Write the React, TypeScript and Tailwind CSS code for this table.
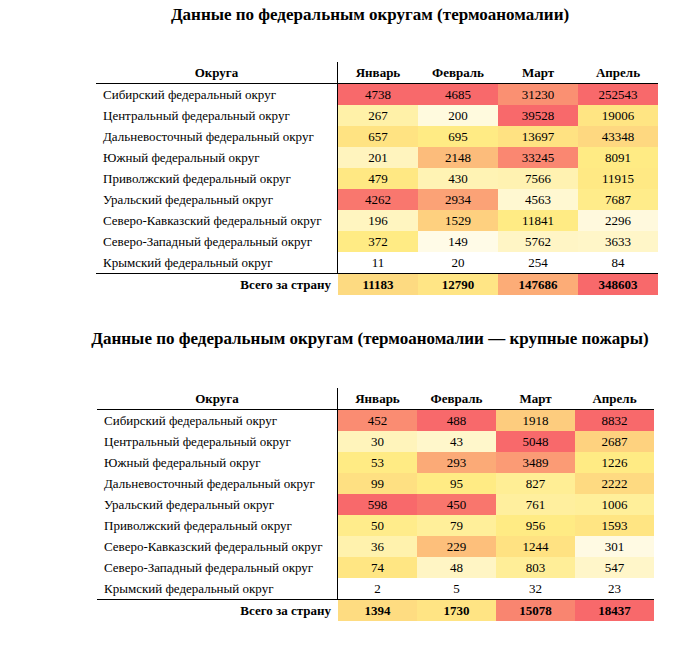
import React from 'react';

type Row = { name: string; values: number[] };

interface HeatTableProps {
  rows: Row[];
  totals: number[];
  totalColors: string[];
  colWidth: string;
}

const YELLOW = [255, 235, 132];
const RED = [248, 105, 107];
const WHITE = [255, 255, 255];

const mix = (a: number[], b: number[], t: number) =>
  `rgb(${a.map((c, i) => Math.round(c + (b[i] - c) * t)).join(',')})`;

// white -> yellow -> red, the midpoint is the column median
const heat = (v: number, col: number[]) => {
  const sorted = [...col].sort((x, y) => x - y);
  const min = sorted[0];
  const max = sorted[sorted.length - 1];
  const mid = sorted[Math.floor(sorted.length / 2)];
  if (v <= mid) return mix(WHITE, YELLOW, mid === min ? 1 : (v - min) / (mid - min));
  return mix(YELLOW, RED, (v - mid) / (max - mid));
};

const months = ['Январь', 'Февраль', 'Март', 'Апрель'];

const HeatTable: React.FC<HeatTableProps> = ({ rows, totals, totalColors, colWidth }) => {
  const columns = months.map((_, i) => rows.map((r) => r.values[i]));
  const grid = colWidth === '80' ? 'grid-cols-[242px_repeat(4,80px)]' : 'grid-cols-[241px_repeat(4,79px)]';
  const ml = colWidth === '80' ? 'ml-[96px]' : 'ml-[97px]';

  return (
    <div className={`grid ${grid} ${ml} text-[13px] leading-none`}>
      <div className="h-[22px] border-b border-r border-black font-bold flex items-center justify-center">
        Округа
      </div>
      {months.map((m) => (
        <div key={m} className="h-[22px] border-b border-black font-bold flex items-center justify-center">
          {m}
        </div>
      ))}
      {rows.map((row, ri) => {
        const last = ri === rows.length - 1;
        return (
          <React.Fragment key={row.name}>
            <div
              className={`h-[21px] pl-[7px] border-r border-black flex items-center ${
                last ? 'border-b h-[22px]' : ''
              }`}
            >
              {row.name}
            </div>
            {row.values.map((v, ci) => (
              <div
                key={ci}
                className={`h-[21px] flex items-center justify-center ${last ? 'border-b border-black h-[22px]' : ''}`}
                style={{ backgroundColor: heat(v, columns[ci]) }}
              >
                {v}
              </div>
            ))}
          </React.Fragment>
        );
      })}
      <div className="h-[21px] pr-[7px] font-bold flex items-center justify-end">Всего за страну</div>
      {totals.map((t, i) => (
        <div
          key={i}
          className="h-[21px] font-bold flex items-center justify-center"
          style={{ backgroundColor: totalColors[i] }}
        >
          {t}
        </div>
      ))}
    </div>
  );
};

const allFires: Row[] = [
  { name: 'Сибирский федеральный округ', values: [4738, 4685, 31230, 252543] },
  { name: 'Центральный федеральный округ', values: [267, 200, 39528, 19006] },
  { name: 'Дальневосточный федеральный округ', values: [657, 695, 13697, 43348] },
  { name: 'Южный федеральный округ', values: [201, 2148, 33245, 8091] },
  { name: 'Приволжский федеральный округ', values: [479, 430, 7566, 11915] },
  { name: 'Уральский федеральный округ', values: [4262, 2934, 4563, 7687] },
  { name: 'Северо-Кавказский федеральный округ', values: [196, 1529, 11841, 2296] },
  { name: 'Северо-Западный федеральный округ', values: [372, 149, 5762, 3633] },
  { name: 'Крымский федеральный округ', values: [11, 20, 254, 84] },
];

const bigFires: Row[] = [
  { name: 'Сибирский федеральный округ', values: [452, 488, 1918, 8832] },
  { name: 'Центральный федеральный округ', values: [30, 43, 5048, 2687] },
  { name: 'Южный федеральный округ', values: [53, 293, 3489, 1226] },
  { name: 'Дальневосточный федеральный округ', values: [99, 95, 827, 2222] },
  { name: 'Уральский федеральный округ', values: [598, 450, 761, 1006] },
  { name: 'Приволжский федеральный округ', values: [50, 79, 956, 1593] },
  { name: 'Северо-Кавказский федеральный округ', values: [36, 229, 1244, 301] },
  { name: 'Северо-Западный федеральный округ', values: [74, 48, 803, 547] },
  { name: 'Крымский федеральный округ', values: [2, 5, 32, 23] },
];

export default function App() {
  return (
    <div className="w-[680px] h-[660px] bg-white text-black [font-family:Liberation_Serif,serif]">
      <h1 className="pt-[5px] pl-[82px] w-[658px] text-center text-[17px] leading-[20px] font-bold whitespace-nowrap">
        Данные по федеральным округам (термоаномалии)
      </h1>
      <div className="mt-[37px]">
        <HeatTable
          rows={allFires}
          totals={[11183, 12790, 147686, 348603]}
          totalColors={['#FDDA81', '#FFE585', '#FCAC77', '#F8696B']}
          colWidth="80"
        />
      </div>
      <h1 className="mt-[34px] pl-[82px] w-[658px] text-center text-[17px] leading-[20px] font-bold whitespace-nowrap">
        Данные по федеральным округам (термоаномалии — крупные пожары)
      </h1>
      <div className="mt-[39px]">
        <HeatTable
          rows={bigFires}
          totals={[1394, 1730, 15078, 18437]}
          totalColors={['#FEDC81', '#FFE484', '#F98570', '#F8696B']}
          colWidth="79"
        />
      </div>
    </div>
  );
}
